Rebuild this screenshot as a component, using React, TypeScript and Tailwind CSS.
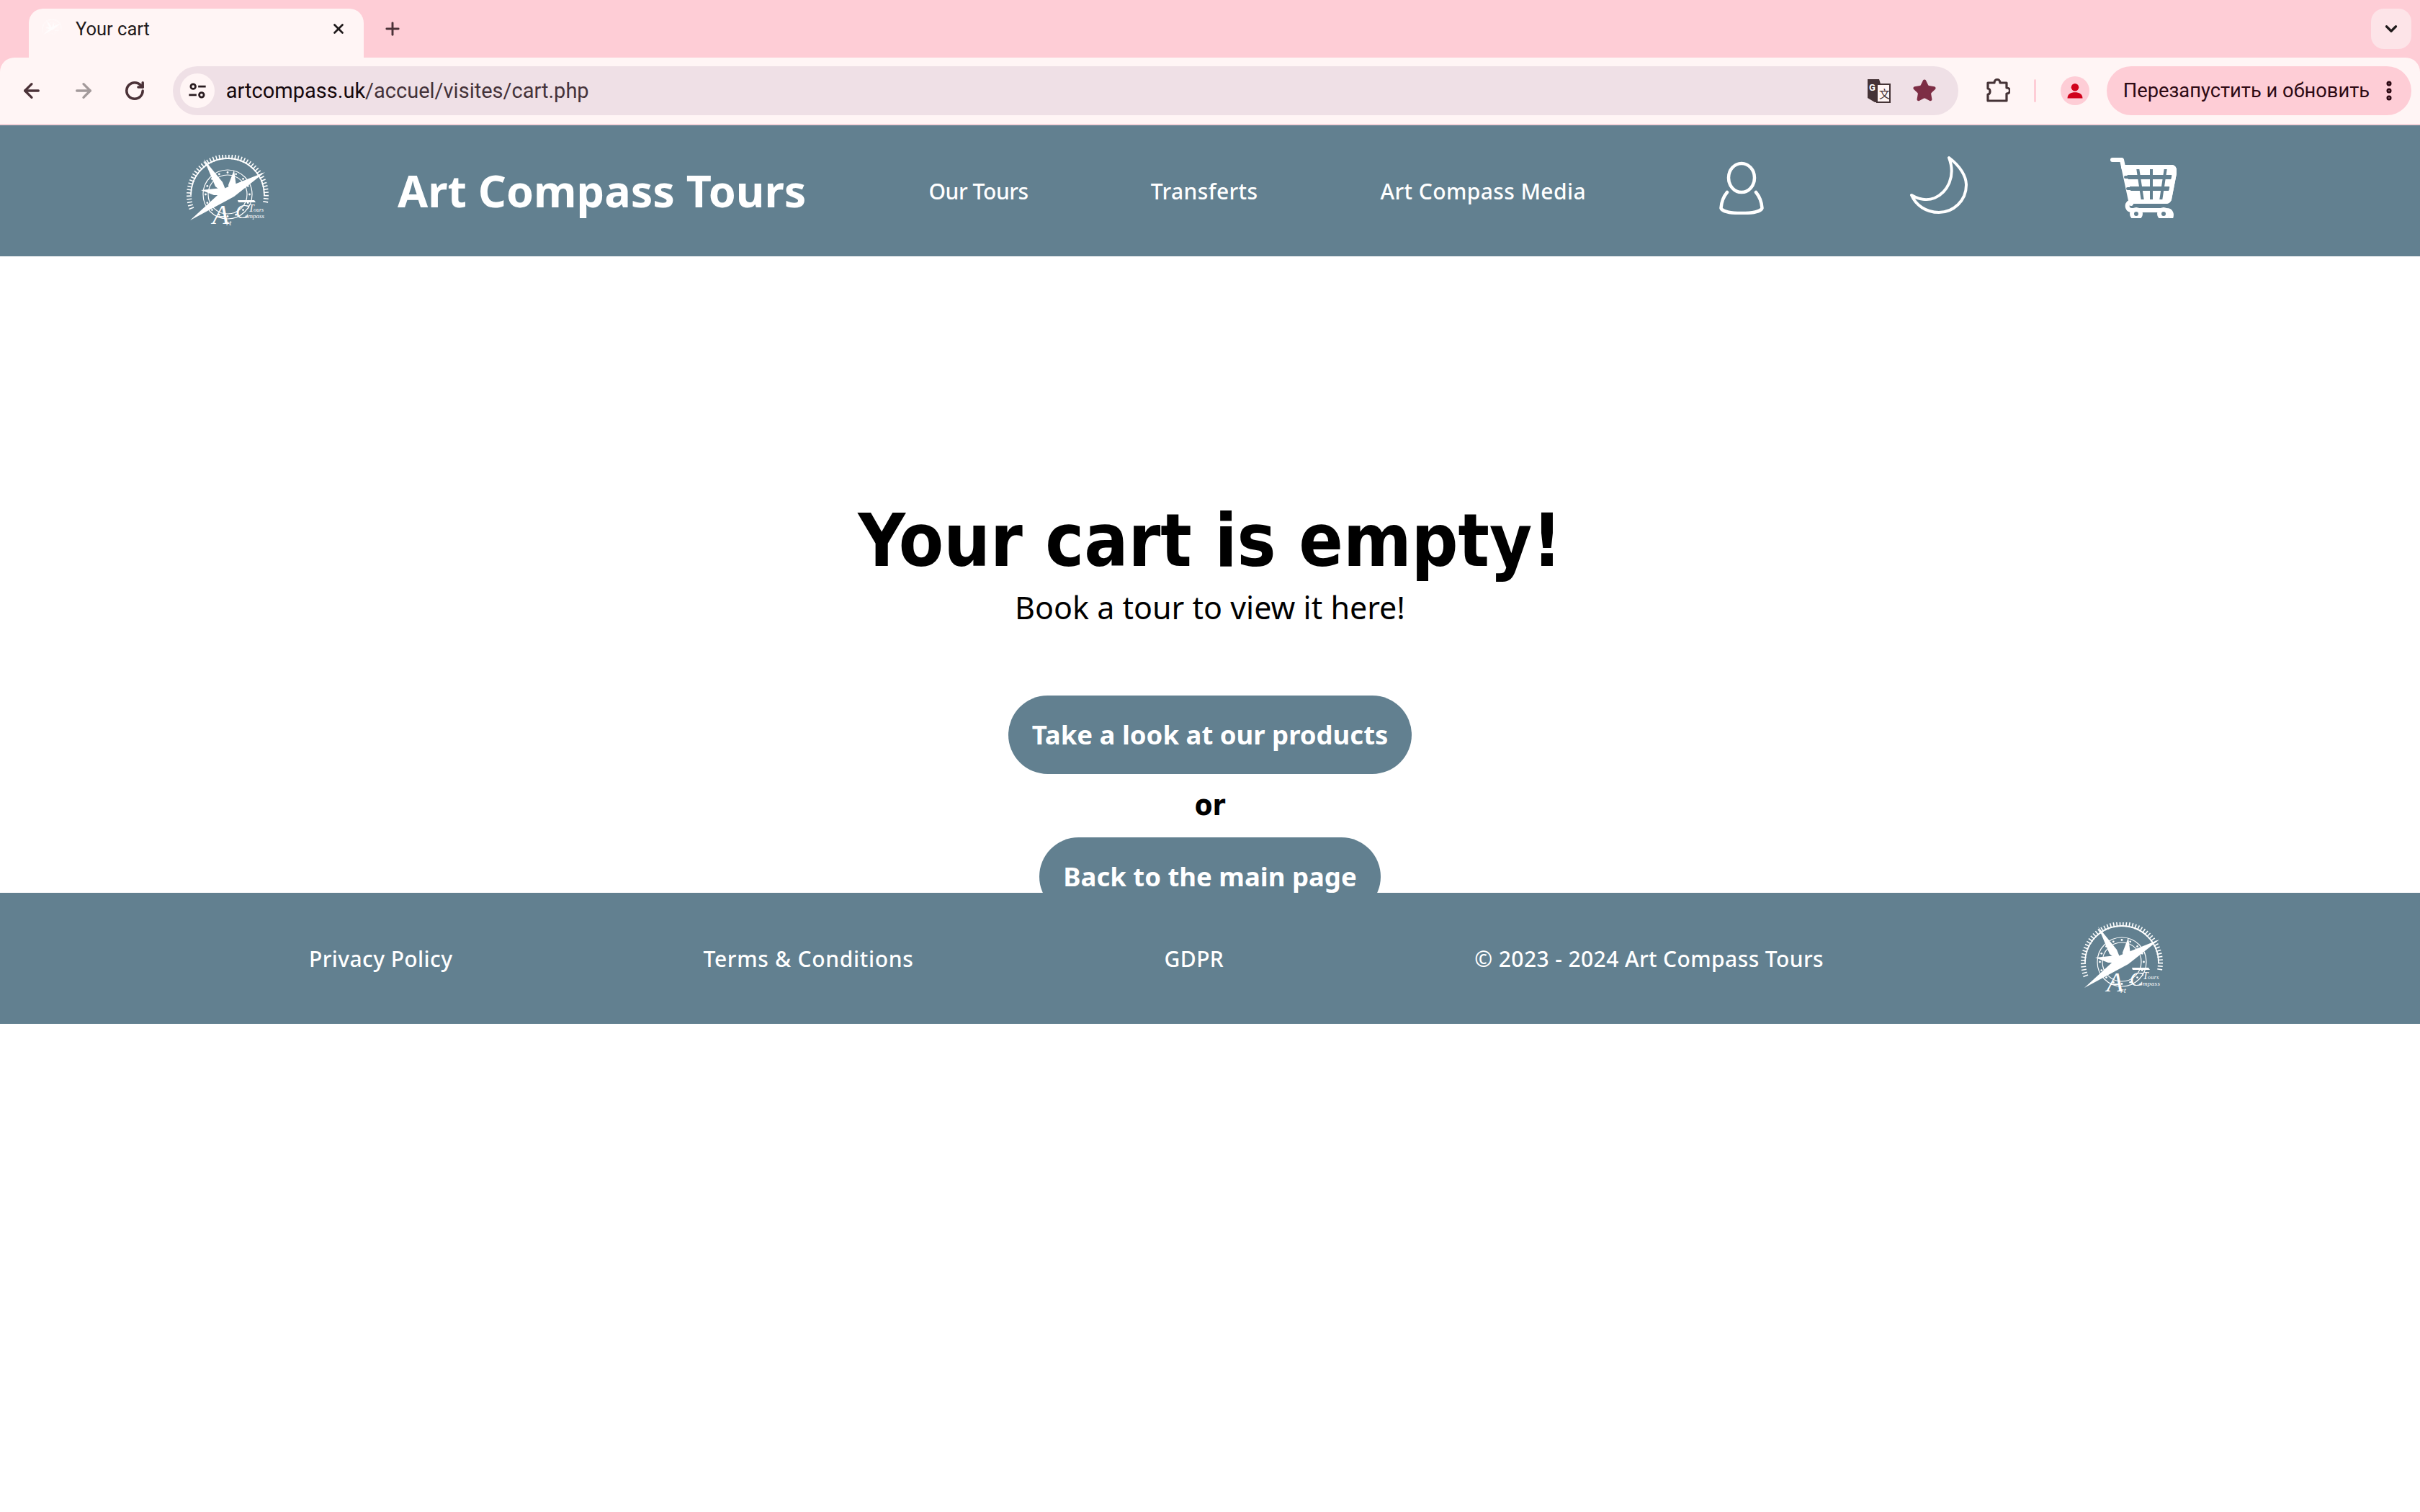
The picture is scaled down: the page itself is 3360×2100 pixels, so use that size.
import { ArrowLeft, ArrowRight, RotateCw, Plus, X, ChevronDown, Star, EllipsisVertical } from "lucide-react";

const TICKS = Array.from({ length: 46 }, (_, i) => 200 - i * (210 / 45));

const CompassLogo = ({ className, withText = true }: { className: string; withText?: boolean }) => (
  <svg viewBox="34 24 120 112" className={className} fill="#fff">
    {TICKS.map(deg => {
      const a = (deg * Math.PI) / 180;
      const cx = 95;
      const cy = 80;
      return (
        <line
          key={deg}
          x1={cx + 50 * Math.cos(a)}
          y1={cy - 50 * Math.sin(a)}
          x2={cx + 57 * Math.cos(a)}
          y2={cy - 57 * Math.sin(a)}
          stroke="#fff"
          strokeWidth="1.600"
        />
      );
    })}
    <path d="M44 80A51 51 0 0 1 146 80" fill="none" stroke="#fff" strokeWidth="1.800" />
    <circle cx="95" cy="79" r="34" fill="none" stroke="#fff" strokeWidth="1.200" />
    <circle cx="95" cy="79" r="27" fill="none" stroke="#fff" strokeWidth="1.200" />
    {Array.from({ length: 16 }, (_, i) => {
      const a = (i * Math.PI) / 8;
      return <circle key={i} cx={95 + 30.5 * Math.cos(a)} cy={79 + 30.5 * Math.sin(a)} r="1.400" />;
    })}
    <path d="M43 115 L92 70 L147 48 L104 82Z" />
    <path d="M62 30 L88 62 L96 82 L78 68Z" />
    <path d="M104 45 L107 68 L98 82 L96 66Z" />
    <path d="M58 73 L88 70 L94 80 L76 80Z" />
    <path d="M109 87 H132 L134 90 H110Z" />
    {withText && (
      <>
        <text x="74" y="120" fontFamily="'Liberation Serif', serif" fontStyle="italic" fontSize="38">A</text>
        <text x="93" y="122" fontFamily="'Liberation Serif', serif" fontStyle="italic" fontSize="11">rt</text>
        <text x="106" y="112" fontFamily="'Liberation Serif', serif" fontStyle="italic" fontSize="28">C</text>
        <text x="119" y="112" fontFamily="'Liberation Serif', serif" fontStyle="italic" fontSize="9">ompass</text>
        <text x="124" y="103" fontFamily="'Liberation Serif', serif" fontStyle="italic" fontSize="14">T</text>
        <text x="131" y="103" fontFamily="'Liberation Serif', serif" fontStyle="italic" fontSize="8">ours</text>
      </>
    )}
  </svg>
);

const UserIcon = () => (
  <svg viewBox="0 0 62 74" className="h-[74px] w-[62px]" fill="none" stroke="#fff" strokeWidth="4.500" strokeLinecap="round" strokeLinejoin="round">
    <ellipse cx="31" cy="23" rx="18" ry="20" />
    <path d="M11 43C6 49 3 58 2.500 65C4 70 17 72 31 72C45 72 58 70 59.500 65C59 58 56 49 51 43" />
  </svg>
);

const MoonIcon = () => (
  <svg viewBox="0 0 80 80" className="h-[80px] w-[80px]" fill="none" stroke="#fff" strokeWidth="4" strokeLinecap="round" strokeLinejoin="round">
    <path d="M54 2C70 14 78 28 78 40C78 62 60 78 40 78C22 78 8 68 2 54C12 60 24 62 34 58C52 50 64 28 54 2Z" />
  </svg>
);

const CartIcon = () => (
  <svg viewBox="0 0 92 84" className="h-[84px] w-[92px]" fill="none" stroke="#fff" strokeLinecap="round" strokeLinejoin="round">
    <path d="M3 3H16L29 64" strokeWidth="6" />
    <path d="M18 13H85C89 13 90 18 89 22L82 58C81 60 80 61 78 61H30C22 61 21 73 30 73H78C85 73 86 79 84 84" strokeWidth="6" />
    <path d="M20 13H88V24H20ZM24 30H86V40H24ZM27 46H84V58H27Z" fill="#fff" stroke="none" />
    <path d="M38 14L45 60M57 14V60M77 14L70 60M21 27H88M24 43H85" strokeWidth="4" stroke="#628090" />
    <path d="M18 13H85C89 13 90 18 89 22L82 58C81 60 80 61 78 61H30" strokeWidth="6" />
    <circle cx="36" cy="78" r="6" fill="#628090" strokeWidth="6" />
    <circle cx="74" cy="78" r="6" fill="#628090" strokeWidth="6" />
  </svg>
);

const TuneIcon = () => (
  <svg viewBox="0 0 24 24" className="h-[28px] w-[28px]" fill="none" stroke="#2a1c20" strokeWidth="2.400">
    <circle cx="7" cy="7" r="2.800" />
    <path d="M13 7H22M2 17H11" />
    <circle cx="17" cy="17" r="2.800" />
  </svg>
);

const TranslateIcon = () => (
  <svg viewBox="0 0 34 34" className="h-[34px] w-[34px]">
    <path d="M2 1H18L28 33H12L2 27Z" fill="#453336" />
    <path d="M15 8H33V33H15Z" fill="#fff5f5" stroke="#453336" strokeWidth="2" />
    <text x="4" y="17" fontSize="13" fontWeight="700" fill="#fff" fontFamily="Roboto, sans-serif">G</text>
    <text x="18" y="27" fontSize="15" fill="#453336" fontFamily="'Noto Sans CJK SC', sans-serif">文</text>
  </svg>
);

const PuzzleIcon = () => (
  <svg viewBox="0 0 34 34" className="h-[34px] w-[34px]" fill="none" stroke="#453336" strokeWidth="3.200" strokeLinejoin="round">
    <path d="M3 6H12C12 0 20 0 20 6H29V13C35 13 35 21 29 21V31H3V22C7 22 7 14 3 14Z" />
  </svg>
);

const ProfileIcon = () => (
  <svg viewBox="0 0 24 24" className="h-[28px] w-[28px]" fill="#d0021b">
    <circle cx="12" cy="8" r="4.500" />
    <path d="M3 21C3 16 7 14 12 14C17 14 21 16 21 21Z" />
  </svg>
);

const BrowserChrome = () => (
  <div className="bg-[#fecdd6] font-['Roboto',sans-serif]">
    <div className="flex h-[80px] items-start pt-[12px]">
      <div className="ml-[40px] flex h-[68px] w-[465px] rounded-t-[20px] bg-[#fff5f5] pl-[17px] pr-[24px] pt-[13px]">
        <CompassLogo className="h-[30px] w-[30px] opacity-70" withText={false} />
        <span className="ml-[18px] text-[25.500px] leading-[30px] text-[#1f1a1b]">Your cart</span>
        <X className="ml-auto mt-[4px] h-[22px] w-[22px] text-[#1f1a1b]" strokeWidth={3} />
      </div>
      <Plus className="ml-[26px] mt-[14px] h-[28px] w-[28px] text-[#4b3238]" strokeWidth={2.500} />
      <div className="ml-auto mr-[12px] flex h-[56px] w-[56px] items-center justify-center rounded-[18px] bg-[#fde4e8]">
        <ChevronDown className="h-[26px] w-[26px] text-[#1f1a1b]" strokeWidth={3} />
      </div>
    </div>
    <div className="flex h-[92px] items-center rounded-t-[20px] bg-[#fff5f5] pl-[28px] pr-[12px]">
      <ArrowLeft className="h-[32px] w-[32px] text-[#4b3238]" strokeWidth={2.500} />
      <ArrowRight className="ml-[40px] h-[32px] w-[32px] text-[#a39a9b]" strokeWidth={2.500} />
      <RotateCw className="ml-[40px] h-[30px] w-[30px] text-[#4b3238]" strokeWidth={2.800} />
      <div className="ml-[38px] flex h-[68px] w-[2479px] shrink-0 items-center rounded-full bg-[#efe0e6] pl-[10px] pr-[30px]">
        <div className="flex h-[48px] w-[48px] items-center justify-center rounded-full bg-[#fff5f5]">
          <TuneIcon />
        </div>
        <span className="ml-[16px] mt-[2px] text-[29px] text-[#45333a]">
          <span className="text-[#16090d]">artcompass.uk</span>/accuel/visites/cart.php
        </span>
        <div className="ml-auto flex items-center gap-[30px]">
          <TranslateIcon />
          <Star className="h-[34px] w-[34px] text-[#7d2e45]" fill="#7d2e45" />
        </div>
      </div>
      <div className="ml-[38px]">
        <PuzzleIcon />
      </div>
      <div className="ml-[33px] h-[32px] w-[3px] rounded bg-[#fecdd6]" />
      <div className="ml-[34px] flex h-[40px] w-[40px] items-center justify-center rounded-full bg-[#fecdd6]">
        <ProfileIcon />
      </div>
      <div className="ml-[24px] flex h-[68px] w-[424px] items-center rounded-full bg-[#fecdd6] pl-[23px]">
        <span className="whitespace-nowrap text-[27.300px] text-[#2d0a14]">Перезапустить и обновить</span>
        <EllipsisVertical className="ml-auto mr-[14px] h-[34px] w-[34px] text-[#2d0a14]" strokeWidth={3} />
      </div>
    </div>
    <div className="h-[2px] bg-[#f3d3da]" />
  </div>
);

const Header = () => (
  <header className="flex h-[182px] items-center bg-[#628090] pl-[255px] text-white">
    <CompassLogo className="mt-[12px] h-[112px] w-[120px]" />
    <h1 className="ml-[177px] whitespace-nowrap text-[61px] font-bold">Art Compass Tours</h1>
    <nav className="ml-[170px] flex gap-[170px] whitespace-nowrap text-[30px] font-medium tracking-[0.4px]">
      <a className="tracking-[-0.4px]">Our Tours</a>
      <a>Transferts</a>
      <a>Art Compass Media</a>
    </nav>
    <div className="ml-[185px] -mt-[8px]">
      <UserIcon />
    </div>
    <div className="ml-[203px] -mt-[16px]">
      <MoonIcon />
    </div>
    <div className="ml-[198px] -mt-[9px]">
      <CartIcon />
    </div>
  </header>
);

const EmptyCart = () => (
  <main className="flex h-[884px] flex-col items-center overflow-hidden bg-white pt-[332px] text-black">
    <h2 className="font-['DejaVu_Sans_Condensed','DejaVu_Sans',sans-serif] text-[101px] font-bold leading-[126px] font-stretch-condensed">Your cart is empty!</h2>
    <p className="font-['Noto_Sans',sans-serif] text-[43px] leading-[60px]">Book a tour to view it here!</p>
    <a className="mt-[92px] flex h-[109px] w-[560px] shrink-0 items-center justify-center rounded-full bg-[#628090] text-[36.500px] font-bold text-white">
      Take a look at our products
    </a>
    <span className="mt-[16px] font-['DejaVu_Sans_Condensed','DejaVu_Sans',sans-serif] text-[40px] font-bold leading-[55px] font-stretch-condensed">or</span>
    <a className="mt-[17px] flex h-[109px] w-[474px] shrink-0 items-center justify-center rounded-full bg-[#628090] text-[36.500px] font-bold text-white">
      Back to the main page
    </a>
  </main>
);

const Footer = () => (
  <footer className="flex h-[182px] items-center bg-[#628090] pl-[429px] text-[30px] font-medium tracking-[0.4px] text-white">
    <div className="flex gap-[348px] whitespace-nowrap">
      <a>Privacy Policy</a>
      <a className="tracking-[0.7px]">Terms &amp; Conditions</a>
      <a>GDPR</a>
      <span>© 2023 - 2024 Art Compass Tours</span>
    </div>
    <CompassLogo className="ml-[353px] mt-[12px] h-[112px] w-[120px]" />
  </footer>
);

export default function App() {
  return (
    <div className="min-h-[2100px] bg-white font-['Noto_Sans',sans-serif]">
      <BrowserChrome />
      <Header />
      <EmptyCart />
      <Footer />
    </div>
  );
}
